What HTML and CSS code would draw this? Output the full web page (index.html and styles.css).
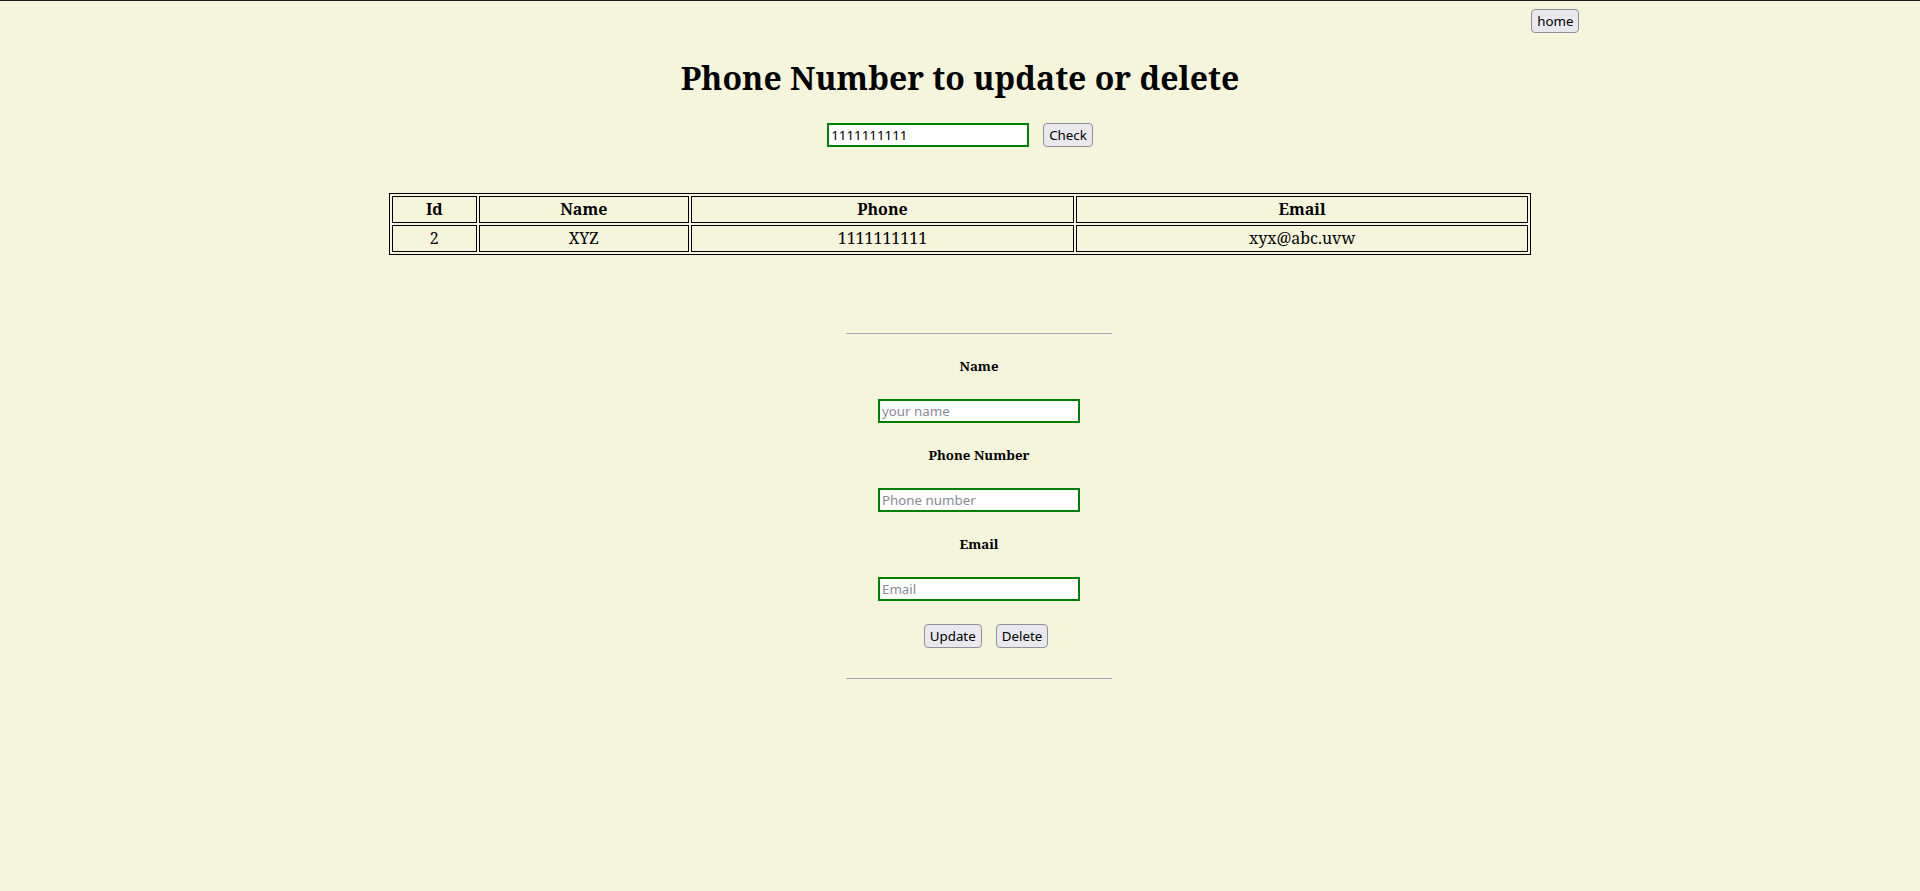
FILE: index.html
```html
<!DOCTYPE html>
<html lang="en">
<head>
<meta charset="utf-8">
<title>Update or delete</title>
<link rel="stylesheet" href="styles.css">
</head>
<body>
  <div class="topbar">
    <button class="btn">home</button>
  </div>
  <h1 class="title">Phone Number to update or delete</h1>
  <div class="search">
    <input class="field" type="text" value="1111111111">
    <button class="btn">Check</button>
  </div>
  <table class="records">
    <thead>
      <tr>
        <th class="c-id">Id</th>
        <th class="c-name">Name</th>
        <th class="c-phone">Phone</th>
        <th class="c-email">Email</th>
      </tr>
    </thead>
    <tbody>
      <tr>
        <td>2</td>
        <td>XYZ</td>
        <td>1111111111</td>
        <td>xyx@abc.uvw</td>
      </tr>
    </tbody>
  </table>
  <div class="form-wrap">
    <div class="form">
      <div class="rule"></div>
      <div class="label">Name</div>
      <input class="field" type="text" placeholder="your name">
      <div class="label">Phone Number</div>
      <input class="field" type="text" placeholder="Phone number">
      <div class="label">Email</div>
      <input class="field" type="text" placeholder="Email">
      <div class="actions">
        <button class="btn">Update</button>
        <button class="btn">Delete</button>
      </div>
      <div class="rule rule-bottom"></div>
    </div>
  </div>
</body>
</html>
```
FILE: styles.css
```css
html {
  background: #f5f5dc;
  border-top: 1px solid #1c1c1c;
}
body {
  margin: 8px;
  font-family: "Noto Serif", "DejaVu Serif", serif;
  color: #000;
}
.topbar {
  padding-left: 80%;
  height: 24px;
}
.btn {
  font-family: "Noto Sans", "Open Sans", sans-serif;
  font-size: 13.333px;
  line-height: 18px;
  height: 24px;
  padding: 2px 5px;
  background: #e9e9ed;
  color: #000;
  border: 1px solid #8f8f9d;
  border-radius: 4px;
  box-sizing: border-box;
}
.title {
  font-size: 32px;
  line-height: 44px;
  font-weight: bold;
  text-align: center;
  margin: 23px 0 23px;
}
.search {
  display: flex;
  justify-content: center;
  gap: 14px;
  height: 24px;
}
.field {
  width: 202px;
  height: 24px;
  box-sizing: border-box;
  border: 2px solid #008000;
  background: #fff;
  padding: 1px 2px;
  margin: 0;
  font-family: "Noto Sans", "Open Sans", sans-serif;
  font-size: 13.333px;
  line-height: 18px;
  color: #000;
  outline: none;
}
.field::placeholder {
  color: #8a8a95;
}
.records {
  width: 60%;
  margin: 46px auto 0;
  table-layout: fixed;
  border: 1px solid #000;
  border-spacing: 2px;
  font-size: 16px;
}
.records th,
.records td {
  border: 1px solid #000;
  padding: 1px;
  line-height: 23px;
  text-align: center;
  box-sizing: border-box;
}
.records th {
  font-weight: bold;
}
.c-id { width: 85px; }
.c-name { width: 210px; }
.c-phone { width: 383px; }
.c-email { width: 452px; }
.form-wrap {
  display: flex;
  justify-content: center;
  padding-left: 38px;
  margin-top: 78px;
}
.form {
  width: 266px;
  display: flex;
  flex-direction: column;
  align-items: center;
  gap: 23px;
}
.rule {
  width: 100%;
  height: 0;
  border-top: 1px solid #9ea5b0;
}
.rule-bottom {
  margin-top: 7px;
}
.label {
  font-size: 13.28px;
  font-weight: bold;
  line-height: 19px;
  height: 19px;
}
.actions {
  display: flex;
  gap: 14px;
  padding-left: 14px;
}
```
